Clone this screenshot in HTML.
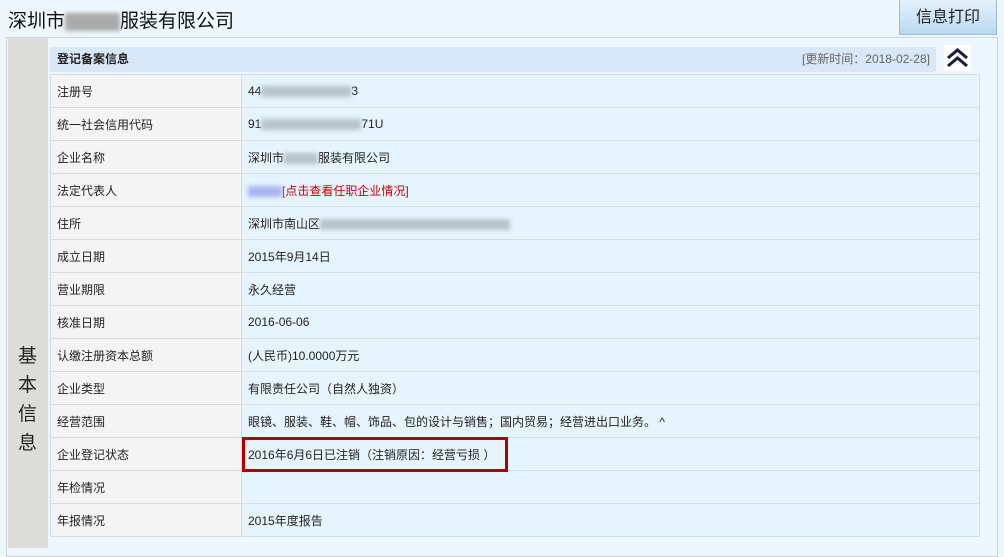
<!DOCTYPE html>
<html><head><meta charset="utf-8"><style>
*{margin:0;padding:0;box-sizing:border-box}
body{width:1004px;height:546px;overflow:hidden;background:#eef7fd;font-family:"Liberation Sans","Noto Sans CJK SC",sans-serif;position:relative;font-size:12px;color:#222}
.title{position:absolute;left:8px;top:6px;font-size:19px;color:#111}
.btn{position:absolute;left:899px;top:-2px;width:98px;height:37px;border:1px solid #9bbbd6;background:linear-gradient(#e4f1fb,#bcdaf2);font-size:16px;text-align:center;line-height:38px;color:#222}
.panel{position:absolute;left:6px;top:37px;width:992px;height:520px;border:1px solid #c9d6e0;background:#eef7fd}
.side{position:absolute;left:8px;top:38px;width:40px;height:510px;background:#dcdcd8}
.side div{position:absolute;left:10px;top:304px;font-size:19px;line-height:29px;width:20px;color:#222}
.hdr{position:absolute;left:50px;top:47px;width:886px;height:25px;background:#d9e8f8;font-weight:bold;font-size:12px;line-height:25px;padding-left:7px}
.upd{position:absolute;right:6px;top:0;font-weight:normal;color:#666}
.arr{position:absolute;left:944px;top:45px;width:27px;height:26px;background:#fff}
table{position:absolute;left:50px;top:74px;border-collapse:collapse;width:930px}
td{height:33px;border:1px solid #d3dde5;padding-left:6px;font-size:12px}
td.l{width:191px;background:#f4f4f4}
td.v{background:#e5f4fd}
.bl{display:inline-block;height:11px;background:#b8c4cc;filter:blur(2px);vertical-align:middle}
.red{color:#c00}
.box{position:absolute;left:242px;top:437px;width:266px;height:35px;border:3px solid #b20000}
</style></head><body>
<div class="title">深圳市<span class="bl" style="width:55px;height:18px;background:#aaa"></span>服装有限公司</div>
<div class="btn">信息打印</div>
<div class="panel"></div>
<div class="side"><div>基本信息</div></div>
<div class="hdr">登记备案信息<span class="upd">[更新时间：2018-02-28]</span></div>
<div class="arr"><svg width="27" height="26"><path d="M4 13 L13.5 5 L23 13 M4 21 L13.5 13 L23 21" stroke="#1a1a40" stroke-width="3" fill="none"/></svg></div>
<table>
<tr><td class="l">注册号</td><td class="v">44<span class="bl" style="width:90px"></span>3</td></tr>
<tr><td class="l">统一社会信用代码</td><td class="v">91<span class="bl" style="width:100px"></span>71U</td></tr>
<tr><td class="l">企业名称</td><td class="v">深圳市<span class="bl" style="width:34px"></span>服装有限公司</td></tr>
<tr><td class="l">法定代表人</td><td class="v"><span class="bl" style="width:34px;background:#aab4f0"></span><span class="red">[点击查看任职企业情况]</span></td></tr>
<tr><td class="l">住所</td><td class="v">深圳市南山区<span class="bl" style="width:190px"></span></td></tr>
<tr><td class="l">成立日期</td><td class="v">2015年9月14日</td></tr>
<tr><td class="l">营业期限</td><td class="v">永久经营</td></tr>
<tr><td class="l">核准日期</td><td class="v">2016-06-06</td></tr>
<tr><td class="l">认缴注册资本总额</td><td class="v">(人民币)10.0000万元</td></tr>
<tr><td class="l">企业类型</td><td class="v">有限责任公司（自然人独资）</td></tr>
<tr><td class="l">经营范围</td><td class="v">眼镜、服装、鞋、帽、饰品、包的设计与销售；国内贸易；经营进出口业务。 ^</td></tr>
<tr><td class="l">企业登记状态</td><td class="v">2016年6月6日已注销（注销原因：经营亏损 ）</td></tr>
<tr><td class="l">年检情况</td><td class="v"></td></tr>
<tr><td class="l">年报情况</td><td class="v">2015年度报告</td></tr>
</table>
<div class="box"></div>
</body></html>
